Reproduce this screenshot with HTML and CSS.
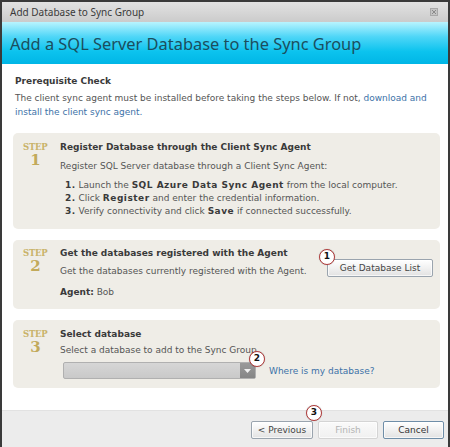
FILE: index.html
```html
<!DOCTYPE html>
<html>
<head>
<meta charset="utf-8">
<link rel="stylesheet" href="styles.css">
</head>
<body>
<div class="window">
  <div class="titlebar">
    <span class="titlebar-text">Add Database to Sync Group</span>
    <svg class="close" width="8" height="8" viewBox="0 0 8 8"><rect x="0.5" y="0.5" width="7" height="7" fill="#c4c4c4" stroke="#a8a8a8"/><path d="M2 2 L6 6 M6 2 L2 6" stroke="#8a8a8a" stroke-width="1"/></svg>
  </div>
  <div class="header">
    <h1 class="heading">Add a SQL Server Database to the Sync Group</h1>
  </div>
  <div class="content">
    <div class="prereq">
      <div class="prereq-title">Prerequisite Check</div>
      <p class="prereq-text">The client sync agent must be installed before taking the steps below. If not, <a class="link">download and</a> <a class="link">install the client sync agent.</a></p>
    </div>

    <div class="step step1">
      <div class="step-label"><span class="step-word">STEP</span><span class="step-num">1</span></div>
      <div class="step-body">
        <div class="step-title">Register Database through the Client Sync Agent</div>
        <div class="step-sub s1">Register SQL Server database through a Client Sync Agent:</div>
        <ol class="step-list">
          <li><b>1.</b> Launch the <b>SQL Azure Data Sync Agent</b> from the local computer.</li>
          <li><b>2.</b> Click <b>Register</b> and enter the credential information.</li>
          <li><b>3.</b> Verify connectivity and click <b>Save</b> if connected successfully.</li>
        </ol>
      </div>
    </div>

    <div class="step step2">
      <div class="step-label"><span class="step-word">STEP</span><span class="step-num">2</span></div>
      <div class="step-body">
        <div class="step-title">Get the databases registered with the Agent</div>
        <div class="step2-row">
          <div class="step-sub s2">Get the databases currently registered with the Agent.</div>
          <button class="btn btn-list">Get Database List</button>
        </div>
        <div class="agent"><b>Agent:</b> Bob</div>
      </div>
      <span class="marker m1">1</span>
    </div>

    <div class="step step3">
      <div class="step-label"><span class="step-word">STEP</span><span class="step-num">3</span></div>
      <div class="step-body">
        <div class="step-title">Select database</div>
        <div class="step-sub s3">Select a database to add to the Sync Group</div>
        <div class="select-row">
          <div class="select"><span class="select-arrow"><svg width="7" height="4" viewBox="0 0 7 4"><path d="M0 0 H7 L3.5 4 Z" fill="#f0f0f0"/></svg></span></div>
          <a class="link where">Where is my database?</a>
        </div>
      </div>
      <span class="marker m2">2</span>
    </div>
  </div>
  <div class="footer">
    <button class="btn btn-prev">&lt; Previous</button>
    <button class="btn btn-finish">Finish</button>
    <button class="btn btn-cancel">Cancel</button>
    <span class="marker m3">3</span>
  </div>
</div>
</body>
</html>
```

FILE: styles.css
```css
* { box-sizing: border-box; }
html, body { margin: 0; padding: 0; background: #fff; }
.window {
  width: 450px;
  height: 447px;
  border: 2px solid #3a3a3a;
  border-bottom: none;
  display: flex;
  flex-direction: column;
  background: #fff;
  font-family: "DejaVu Sans", Verdana, sans-serif;
  font-size: 9px;
  color: #555;
  overflow: hidden;
}
.titlebar {
  height: 20px;
  flex: none;
  background: linear-gradient(#e2e2e2, #cbcbcb);
  display: flex;
  align-items: center;
  justify-content: space-between;
  padding: 0 10px 0 8px;
}
.titlebar-text {
  font-family: "Noto Sans", "Open Sans", sans-serif;
  font-size: 10px;
  color: #3a3a3a;
}
.close { display: block; }
.header {
  height: 43px;
  flex: none;
  background: linear-gradient(#b8f4ff 0%, #4fd6f7 35%, #0cc3ee 70%, #00b6e6 100%);
  display: flex;
  align-items: center;
  padding: 1px 8px 0;
  border-bottom: 1px solid #fff;
}
.heading {
  margin: 0;
  font-family: "Noto Sans", "Open Sans", sans-serif;
  font-weight: normal;
  font-size: 16.4px;
  color: #1b4e5e;
}
.content {
  flex: 1;
  padding: 9px 8px 0 11px;
  position: relative;
}
.prereq { padding-left: 2px; }
.prereq-title {
  font-weight: bold;
  color: #3a3a3a;
  line-height: 14px;
}
.prereq-text {
  margin: 3px 0 0;
  line-height: 14px;
}
.link { color: #3d72a8; }
.step {
  background: #efede7;
  border-radius: 5px;
  display: flex;
  position: relative;
  padding: 7px 10px 10px 10px;
}
.step1 { margin-top: 14px; padding-bottom: 11px; }
.step2 { margin-top: 11px; padding-top: 6px; padding-bottom: 10px; }
.step3 { margin-top: 11px; padding-bottom: 9px; }
.step-label {
  width: 37px;
  flex: none;
  display: flex;
  flex-direction: column;
  align-items: flex-start;
}
.step-word {
  font-family: "DejaVu Serif", "Liberation Serif", serif;
  font-weight: bold;
  font-size: 8.5px;
  color: #c9b36a;
  line-height: 14px;
  letter-spacing: -0.2px;
}
.step-num {
  font-family: "DejaVu Serif", "Liberation Serif", serif;
  font-weight: bold;
  font-size: 15px;
  line-height: 12px;
  color: #c2aa5b;
  width: 25px;
  text-align: center;
}
.step-body { flex: 1; }
.step-title {
  font-weight: bold;
  color: #3a3a3a;
  line-height: 14px;
}
.step-sub { line-height: 14px; }
.s1 { margin-top: 5px; }
.s2 { margin-top: 4px; }
.s3 { margin-top: 2px; }
.step-list {
  list-style: none;
  margin: 6px 0 0;
  padding: 0 0 0 5px;
}
.step-list li { line-height: 13px; }
.step-list b { color: #3a3a3a; letter-spacing: 0.5px; }
.step2-row {
  display: flex;
  align-items: flex-start;
  justify-content: space-between;
}
.agent { margin-top: 7px; line-height: 14px; }
.agent b { color: #3a3a3a; }
.btn {
  font-family: "DejaVu Sans", Verdana, sans-serif;
  font-size: 9px;
  color: #444;
  height: 18px;
  padding: 0;
  border: 1px solid #9aa4ae;
  border-radius: 2px;
  background: linear-gradient(#ffffff, #f1f1f1 50%, #e2e2e2);
  box-shadow: inset 0 0 0 1px rgba(255,255,255,0.7);
  flex: none;
}
.btn-list { width: 106px; margin-top: -1px; margin-right: -3px; }
.select-row {
  display: flex;
  align-items: center;
  margin-top: 5px;
  padding-left: 3px;
}
.select {
  width: 193px;
  height: 17px;
  background: linear-gradient(#d6d6d6, #c9c9c9);
  border: 1px solid #b0b0b0;
  border-radius: 2px;
  display: flex;
  justify-content: flex-end;
}
.select-arrow {
  width: 15px;
  height: 100%;
  background: linear-gradient(#9a9a9a, #858585);
  display: flex;
  align-items: center;
  justify-content: center;
}
.select-arrow svg { display: block; }
.where { margin-left: 13px; }
.footer {
  margin-top: auto;
  height: 37px;
  flex: none;
  background: #ececec;
  border-top: 1px solid #e2e2e2;
  display: flex;
  justify-content: flex-end;
  align-items: flex-start;
  gap: 5px;
  padding: 10px 4px 0 0;
  position: relative;
}
.btn-prev { width: 62px; }
.btn-finish { width: 60px; color: #b4b4b4; border-color: #d4d4d4; background: linear-gradient(#fafafa, #f0f0f0); }
.btn-cancel { width: 61px; border-color: #6f8ea8; color: #333; }
.marker {
  position: absolute;
  width: 16px;
  height: 16px;
  border-radius: 50%;
  border: 1.5px solid #b23a3a;
  background: #fff;
  color: #111;
  font-family: "DejaVu Sans", sans-serif;
  font-weight: bold;
  font-size: 9px;
  line-height: 13px;
  text-align: center;
  box-shadow: 0 0 1px rgba(0,0,0,0.3);
}
.m1 { left: 306px; top: 9px; }
.m2 { left: 236px; top: 31px; }
.m3 { left: 304px; top: -6px; }
```
